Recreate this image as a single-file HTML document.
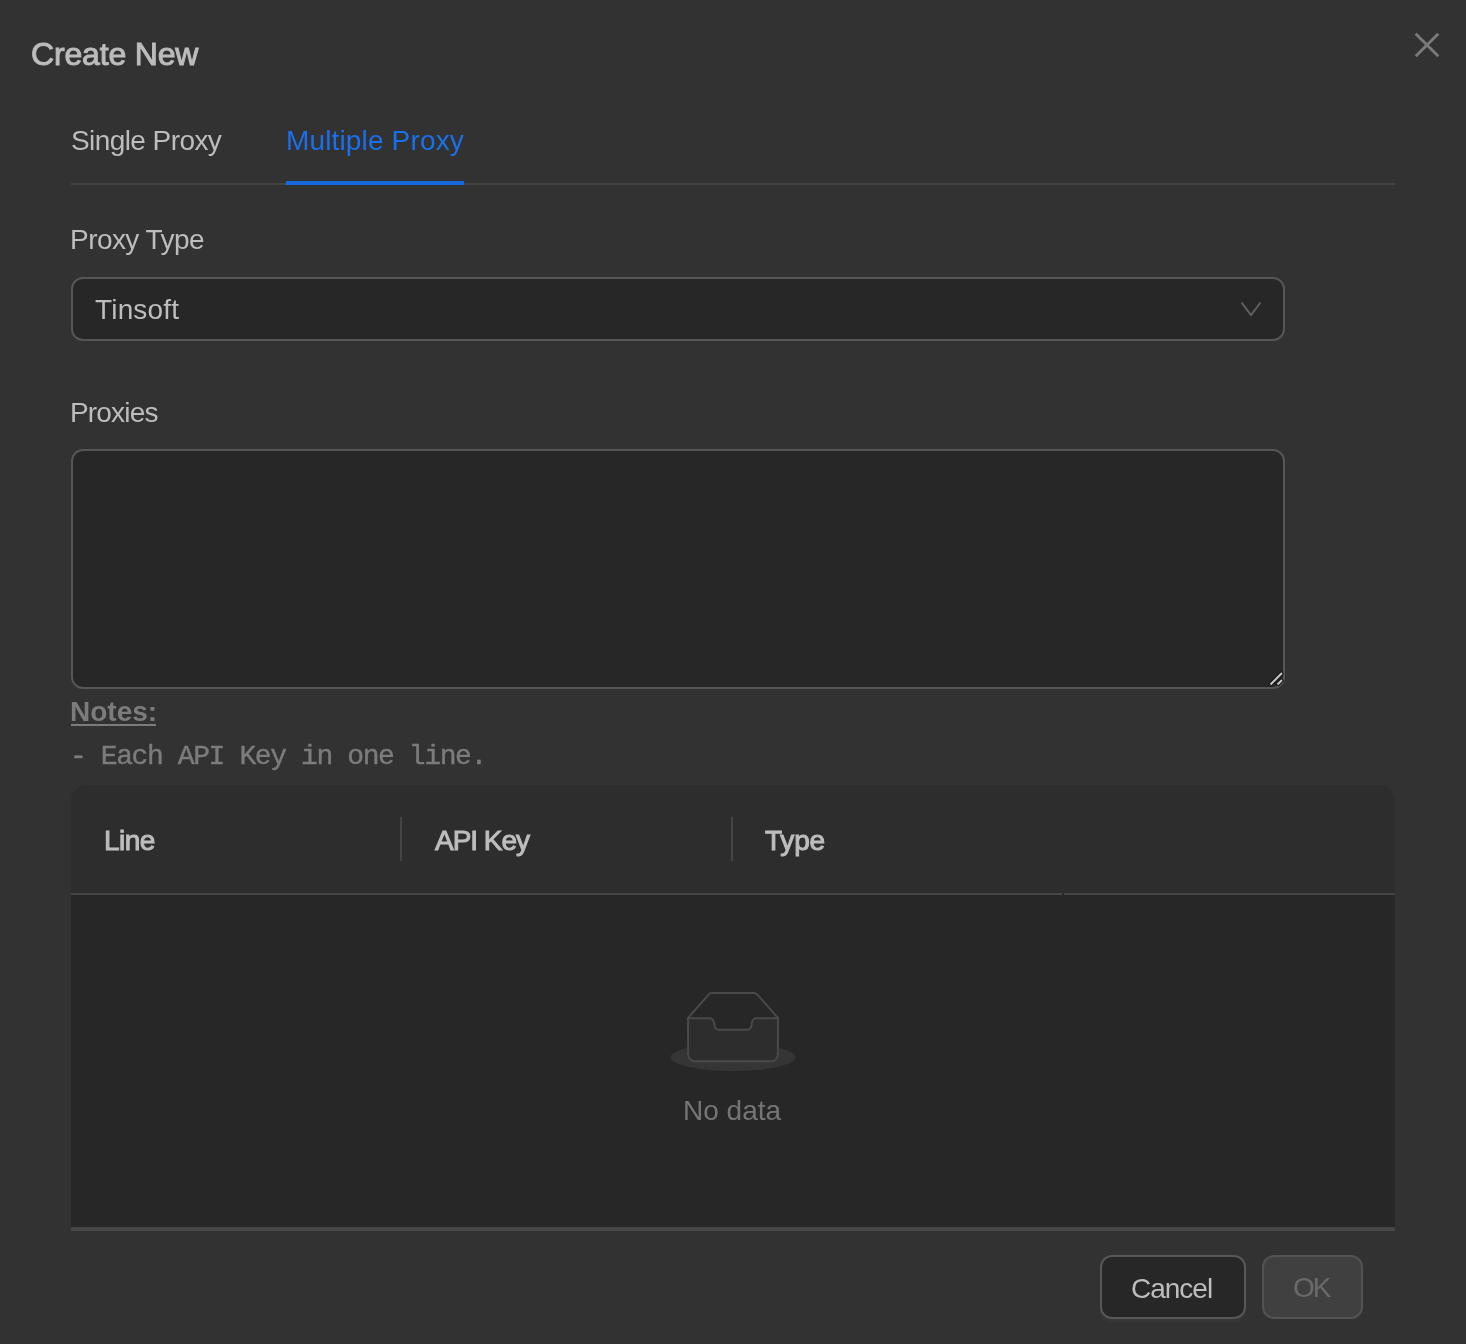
<!DOCTYPE html>
<html><head><meta charset="utf-8">
<style>
html,body{margin:0;padding:0;}
body{will-change:transform;width:1466px;height:1344px;background:#323232;position:relative;overflow:hidden;font-family:"Liberation Sans",sans-serif;}
.a{position:absolute;white-space:pre;}
.t28{font-size:28px;line-height:28px;font-weight:400;}
.b28{font-size:28px;line-height:28px;font-weight:700;}
.s28{font-size:28px;line-height:28px;font-weight:400;-webkit-text-stroke:1px #bdbdbd;}
.lt{color:#bdbdbd;}
</style></head><body>

<!-- title -->
<div class="a" id="title" style="left:31px;top:38px;letter-spacing:-0.17px;font-size:32px;line-height:32px;font-weight:400;-webkit-text-stroke:1px #bcbcbc;color:#bcbcbc;">Create New</div>
<!-- close -->
<svg class="a" style="left:1413px;top:31px" width="28" height="28" viewBox="0 0 28 28"><path d="M2.7 2.7L25.3 25.3M25.3 2.7L2.7 25.3" stroke="#7a7a7a" stroke-width="2.9" fill="none"/></svg>

<!-- tabs -->
<div class="a t28 lt" id="tab1" style="left:71px;top:127px;letter-spacing:-0.58px;">Single Proxy</div>
<div class="a t28" id="tab2" style="left:286px;top:127px;letter-spacing:0.15px;color:#1a70ea;">Multiple Proxy</div>
<div class="a" style="left:71px;top:183px;width:1324px;height:2px;background:#444444;"></div>
<div class="a" style="left:286px;top:181px;width:178px;height:4px;background:#1668dc;"></div>

<!-- proxy type -->
<div class="a t28 lt" id="lbl1" style="left:70px;top:226px;letter-spacing:-0.55px;">Proxy Type</div>
<div class="a" style="left:71px;top:277px;width:1210px;height:60px;border:2px solid #565656;border-radius:12px;background:#272727;"></div>
<div class="a t28 lt" id="tins" style="left:95px;top:296px;letter-spacing:0.17px;">Tinsoft</div>
<svg class="a" style="left:1238px;top:298px" width="26" height="22" viewBox="0 0 26 22"><path d="M3.5 4.5L13 17L22.5 4.5" stroke="#5f5f5f" stroke-width="2" fill="none"/></svg>

<!-- proxies -->
<div class="a t28 lt" id="lbl2" style="left:70px;top:399px;letter-spacing:-0.83px;">Proxies</div>
<div class="a" style="left:71px;top:449px;width:1210px;height:236px;border:2px solid #565656;border-radius:12px;background:#272727;"></div>
<!-- resize grip -->
<svg class="a" style="left:1264px;top:668px" width="20" height="20" viewBox="0 0 20 20">
<path d="M6 17L18.6 4.4" stroke="#121212" stroke-width="4.2"/>
<path d="M13 17L18.6 11.4" stroke="#121212" stroke-width="4.2"/>
<path d="M6.5 16.5L18 5" stroke="#c4c4c4" stroke-width="2.1"/>
<path d="M13.5 16.5L18 12" stroke="#c4c4c4" stroke-width="2.1"/>
</svg>

<!-- notes -->
<div class="a b28" id="notes" style="left:70px;top:698px;color:#7c7c7c;">Notes:</div>
<div class="a" style="left:71px;top:724px;width:85px;height:2px;background:#7c7c7c;"></div>
<div class="a" id="mono" style="left:70px;top:743px;font-family:'Liberation Mono',monospace;font-size:28px;line-height:28px;letter-spacing:-1.4px;color:#7c7c7c;-webkit-text-stroke:0.4px #7c7c7c;">- Each API Key in one line.</div>

<!-- table -->
<div class="a" style="left:71px;top:785px;width:1324px;height:108px;background:#2d2d2d;border-radius:16px 16px 0 0;"></div>
<div class="a" style="left:71px;top:893px;width:1324px;height:2px;background:#454545;"></div>
<div class="a" style="left:1062px;top:893px;width:2px;height:2px;background:#2a2a2a;"></div>
<div class="a" style="left:400px;top:817px;width:2px;height:44px;background:#444444;"></div>
<div class="a" style="left:731px;top:817px;width:2px;height:44px;background:#444444;"></div>
<div class="a s28 lt" id="h1" style="left:104px;top:827px;letter-spacing:-0.5px;">Line</div>
<div class="a s28 lt" id="h2" style="left:435px;top:827px;letter-spacing:-1.03px;">API Key</div>
<div class="a s28 lt" id="h3" style="left:765px;top:827px;letter-spacing:-0.2px;">Type</div>
<div class="a" style="left:71px;top:895px;width:1324px;height:332px;background:#272727;"></div>
<div class="a" style="left:71px;top:1227px;width:1324px;height:2px;background:#444444;"></div>
<div class="a" style="left:71px;top:1229px;width:1324px;height:2px;background:#474847;"></div>

<!-- empty -->
<svg class="a" style="left:669px;top:991px" width="128" height="80" viewBox="0 0 64 41">
<g transform="translate(0 1)" fill="none" fill-rule="evenodd">
<ellipse fill="#353535" cx="32" cy="33" rx="32" ry="7"/>
<g fill-rule="nonzero" stroke="#4a4a4a">
<path d="M55 12.76L44.854 1.258C44.367.474 43.656 0 42.907 0H21.093c-.749 0-1.46.474-1.947 1.257L9 12.761V22h46v-9.24z"/>
<path d="M41.613 15.931c0-1.605.994-2.93 2.227-2.931H55v18.137C55 33.26 53.68 35 52.050 35h-40.1C10.32 35 9 33.259 9 31.137V13h11.16c1.233 0 2.227 1.323 2.227 2.928v.022c0 1.605 1.005 2.901 2.237 2.901h14.752c1.232 0 2.237-1.308 2.237-2.913v-.007z" fill="#2d2d2d"/>
</g></g></svg>
<div class="a t28" id="nodata" style="left:683px;top:1097px;color:#757575;">No data</div>

<!-- buttons -->
<div class="a" style="left:1100px;top:1255px;width:142px;height:60px;border:2px solid #575757;border-radius:12px;background:#272727;box-shadow:0 4px 0 rgba(255,255,255,0.02);"></div>
<div class="a t28" id="cancel" style="left:1131px;top:1275px;letter-spacing:-1px;color:#bdbdbd;">Cancel</div>
<div class="a" style="left:1262px;top:1255px;width:97px;height:60px;border:2px solid #535353;border-radius:12px;background:#404040;"></div>
<div class="a t28" id="ok" style="left:1293px;top:1274px;letter-spacing:-2px;color:#6a6a6a;">OK</div>

</body></html>
